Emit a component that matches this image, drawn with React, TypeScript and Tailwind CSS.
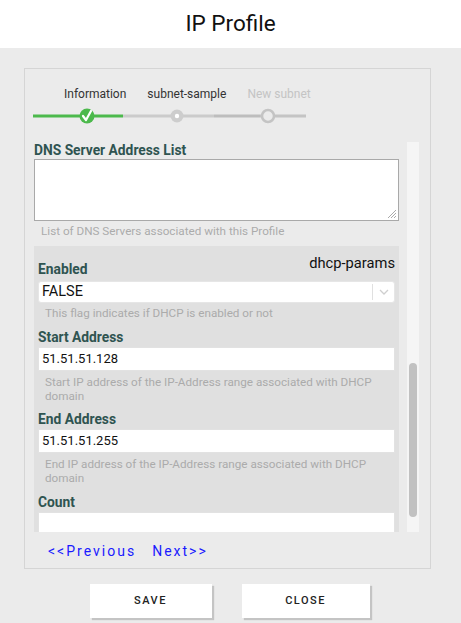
import React from "react";

const steps = [
  { label: "Information", color: "text-[#333]" },
  { label: "subnet-sample", color: "text-[#333]" },
  { label: "New subnet", color: "text-[#c4c4c4]" },
];

function Stepper() {
  return (
    <div className="pt-[17px]">
      <div className="ml-[39px] flex gap-[21px] text-[12px] leading-[16px]">
        {steps.map((s) => (
          <span key={s.label} className={s.color}>
            {s.label}
          </span>
        ))}
      </div>
      <svg width="290" height="20" className="ml-[8px] mt-[4px] block">
        <line x1="0" y1="10" x2="90" y2="10" stroke="#4cb94c" strokeWidth="3" />
        <line x1="90" y1="10" x2="181" y2="10" stroke="#cbcbcb" strokeWidth="3" />
        <line x1="181" y1="10" x2="227" y2="10" stroke="#bdbdbd" strokeWidth="3" />
        <line x1="227" y1="10" x2="273" y2="10" stroke="#c4c4c4" strokeWidth="3" />
        <circle cx="54" cy="10" r="7.5" fill="#4cb94c" />
        <path d="M50 10 l3 4 l5 -9" fill="none" stroke="#fff" strokeWidth="2.2" strokeLinecap="round" strokeLinejoin="round" />
        <circle cx="144" cy="10" r="6.5" fill="#cdcdcd" />
        <circle cx="144" cy="10" r="2.2" fill="#fff" />
        <circle cx="235" cy="10" r="6" fill="#ebebeb" stroke="#c4c4c4" strokeWidth="2.5" />
      </svg>
    </div>
  );
}

function Label({ children }: { children: React.ReactNode }) {
  return <div className="text-[13.8px] font-bold leading-[16px] text-[#2f5451]">{children}</div>;
}

function Help({ children }: { children: React.ReactNode }) {
  return <div className="pl-[7px] text-[11.7px] leading-[14px] text-[#ababab]">{children}</div>;
}

function TextInput({ value }: { value?: string }) {
  return (
    <div className="flex h-[24px] items-center border border-[#e2e2e2] bg-white px-[3px] text-[13px] text-[#111]">
      {value}
    </div>
  );
}

export default function App() {
  return (
    <div className="flex h-[623px] w-full flex-col bg-[#ebebeb] font-['Roboto',sans-serif]">
      <header className="flex h-[48px] items-center justify-center bg-white text-[22.5px] text-[#111]">
        IP Profile
      </header>
      <div className="px-[24px] pt-[20px]">
        <div className="h-[501px] w-[407px] border border-[#d5d5d5]">
          <Stepper />
          <div className="mt-[16px] flex h-[390px] pl-[9px] pr-[10px]">
            <div className="w-[365px] overflow-hidden">
              <div>
                <Label>DNS Server Address List</Label>
              </div>
              <div className="relative mt-[1px] h-[62px] border border-[#a9a9a9] bg-white">
                <svg width="11" height="11" className="absolute bottom-[1px] right-[1px]">
                  <line x1="10" y1="2" x2="2" y2="10" stroke="#aaa" strokeWidth="1" />
                  <line x1="10" y1="5" x2="5" y2="10" stroke="#aaa" strokeWidth="1" />
                  <line x1="10" y1="8" x2="8" y2="10" stroke="#aaa" strokeWidth="1" />
                </svg>
              </div>
              <div className="mt-[3px]">
                <Help>List of DNS Servers associated with this Profile</Help>
              </div>
              <div className="mt-[8px] h-[300px] bg-[#e0e0e0] px-[4px]">
                <div className="flex justify-between">
                  <div className="pt-[15px]">
                    <Label>Enabled</Label>
                  </div>
                  <div className="pt-[9px] text-[14.7px] leading-[16px] text-[#111]">dhcp-params</div>
                </div>
                <div className="mt-[4px] flex h-[22px] items-center rounded-[3px] border border-[#e6e6e6] bg-white text-[14.5px] text-[#111]">
                  <span className="flex-1 pl-[3px]">FALSE</span>
                  <span className="flex h-[16px] w-[22px] items-center justify-center border-l border-[#e0e0e0]">
                    <svg width="10" height="6">
                      <path d="M1 1 l4 4 l4 -4" fill="none" stroke="#cfcfcf" strokeWidth="1.3" />
                    </svg>
                  </span>
                </div>
                <div className="mt-[3px]">
                  <Help>This flag indicates if DHCP is enabled or not</Help>
                </div>
                <div className="mt-[9px]">
                  <Label>Start Address</Label>
                </div>
                <div className="mt-[2px]">
                  <TextInput value="51.51.51.128" />
                </div>
                <div className="mt-[4px]">
                  <Help>
                    Start IP address of the IP-Address range associated with DHCP
                    <br />
                    domain
                  </Help>
                </div>
                <div className="mt-[8px]">
                  <Label>End Address</Label>
                </div>
                <div className="mt-[2px]">
                  <TextInput value="51.51.51.255" />
                </div>
                <div className="mt-[4px]">
                  <Help>
                    End IP address of the IP-Address range associated with DHCP
                    <br />
                    domain
                  </Help>
                </div>
                <div className="mt-[9px]">
                  <Label>Count</Label>
                </div>
                <div className="mt-[2px]">
                  <TextInput />
                </div>
              </div>
            </div>
            <div className="ml-[8px] flex w-[12px] flex-col bg-[#f5f5f5] px-[2px]">
              <div className="mt-[221px] h-[154px] rounded-full bg-[#c1c1c1]" />
            </div>
          </div>
          <div className="mt-[9px] flex gap-[16px] pl-[23px] text-[14px] tracking-[2px] text-[#1a1aff]">
            <span>&lt;&lt;Previous</span>
            <span>Next&gt;&gt;</span>
          </div>
        </div>
      </div>
      <div className="mt-[15px] flex justify-center gap-[30px] pr-[2px]">
        <button className="h-[34px] w-[122px] bg-white text-[11px] font-medium tracking-[1.5px] text-[#222] shadow-[2px_2px_1px_#c4c4c4]">
          SAVE
        </button>
        <button className="h-[34px] w-[128px] bg-white text-[11px] font-medium tracking-[1.5px] text-[#222] shadow-[2px_2px_1px_#c4c4c4]">
          CLOSE
        </button>
      </div>
    </div>
  );
}
